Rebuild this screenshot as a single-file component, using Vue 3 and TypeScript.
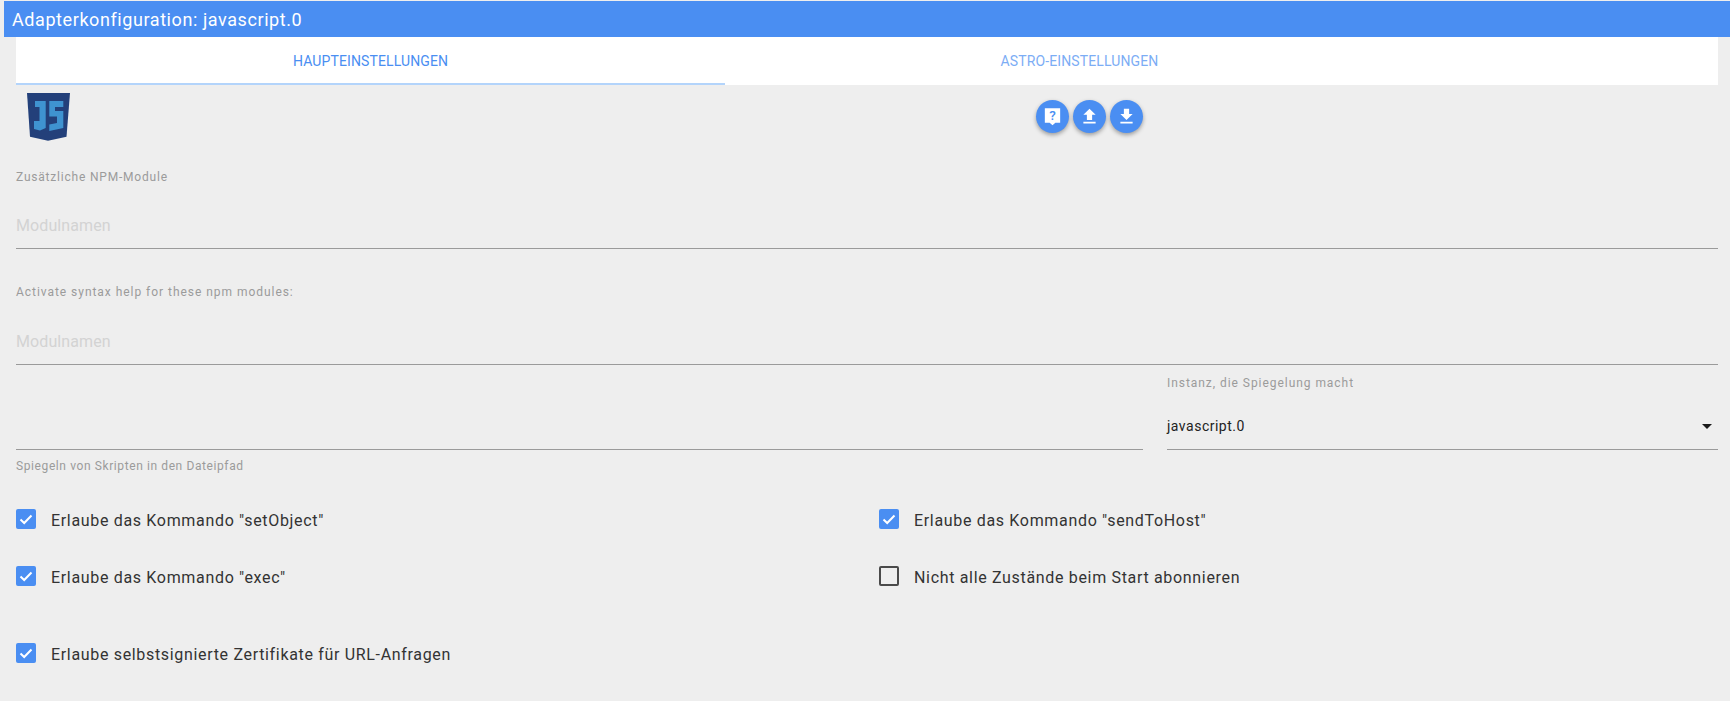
<script setup lang="ts">
interface Check { label: string; checked: boolean }
const leftChecks: Check[] = [
  { label: 'Erlaube das Kommando "setObject"', checked: true },
  { label: 'Erlaube das Kommando "exec"', checked: true },
]
const rightChecks: Check[] = [
  { label: 'Erlaube das Kommando "sendToHost"', checked: true },
  { label: 'Nicht alle Zustände beim Start abonnieren', checked: false },
]
</script>

<template>
  <div class="page">
    <header class="title">Adapterkonfiguration: javascript.0</header>
    <div class="content">
      <nav class="tabs">
        <div class="tab active">HAUPTEINSTELLUNGEN</div>
        <div class="tab">ASTRO-EINSTELLUNGEN</div>
      </nav>
      <div class="toolbar">
        <svg class="logo" width="43" height="48" viewBox="0 0 43 48">
          <path d="M0 0H43L39.500 43.700L21 47.700L3 43.700Z" fill="#23407a" />
          <path d="M8 8H18.700V35L13 37.500L7 36V28H12.500V14H8Z" fill="#3f93d0" />
          <path d="M22.300 8H36.300V14H28V18H36.300V35L22.300 38V31.500L30 30V23.500H22.300Z" fill="#3f93d0" />
        </svg>
        <div class="fabs">
          <button class="fab">
            <svg class="help" width="24" height="24" viewBox="0 0 24 24"><path fill="#fff" d="M4 3.500H20V18.500H15L12 21L9 18.500H4Z" /><text x="12" y="16" class="q">?</text></svg>
          </button>
          <button class="fab">
            <svg width="24" height="24" viewBox="0 0 24 24"><path fill="#fff" d="M9 16V10H5L12 3L19 10H15V16H9ZM5 20V18H19V20H5Z" /></svg>
          </button>
          <button class="fab">
            <svg width="24" height="24" viewBox="0 0 24 24"><path fill="#fff" d="M19 9H15V3H9V9H5L12 16L19 9ZM5 18V20H19V18H5Z" /></svg>
          </button>
        </div>
      </div>

      <section class="field first">
        <label class="small">Zusätzliche NPM-Module</label>
        <div class="input placeholder">Modulnamen</div>
      </section>
      <section class="field second">
        <label class="small">Activate syntax help for these npm modules:</label>
        <div class="input placeholder">Modulnamen</div>
      </section>

      <section class="mirror">
        <div class="mirror-path">
          <div class="input empty"></div>
          <div class="small hint">Spiegeln von Skripten in den Dateipfad</div>
        </div>
        <div class="mirror-instance">
          <label class="small">Instanz, die Spiegelung macht</label>
          <div class="input select">
            <span>javascript.0</span>
            <i class="arrow"></i>
          </div>
        </div>
      </section>

      <section class="checks">
        <div class="check-col">
          <div v-for="c in leftChecks" :key="c.label" class="check">
            <span class="box" :class="{ on: c.checked }">
              <svg v-if="c.checked" width="20" height="20" viewBox="0 0 20 20"><path d="M4.500 10.500L8.200 14L15.500 6.500" fill="none" stroke="#fff" stroke-width="2" /></svg>
            </span>
            <span class="check-label">{{ c.label }}</span>
          </div>
        </div>
        <div class="check-col">
          <div v-for="c in rightChecks" :key="c.label" class="check">
            <span class="box" :class="{ on: c.checked }">
              <svg v-if="c.checked" width="20" height="20" viewBox="0 0 20 20"><path d="M4.500 10.500L8.200 14L15.500 6.500" fill="none" stroke="#fff" stroke-width="2" /></svg>
            </span>
            <span class="check-label">{{ c.label }}</span>
          </div>
        </div>
      </section>

      <div class="check last">
        <span class="box on">
          <svg width="20" height="20" viewBox="0 0 20 20"><path d="M4.500 10.500L8.200 14L15.500 6.500" fill="none" stroke="#fff" stroke-width="2" /></svg>
        </span>
        <span class="check-label">Erlaube selbstsignierte Zertifikate für URL-Anfragen</span>
      </div>
    </div>
  </div>
</template>

<style>
html, body { margin: 0; background: #eeeeee; overflow: hidden; }
</style>

<style scoped>
.page {
  width: 1730px;
  height: 701px;
  box-sizing: border-box;
  padding: 1px 0 0 4px;
  background: #eeeeee;
  font-family: Roboto, "Noto Sans", sans-serif;
  overflow: hidden;
}
.title {
  height: 36px;
  line-height: 37px;
  padding-left: 8px;
  background: #4a8ef2;
  color: #fff;
  font-size: 18px;
  letter-spacing: 0.58px;
}
.content { padding: 0 12px; }
.tabs { display: flex; height: 48px; background: #fff; }
.tab {
  flex: 0 0 709px;
  box-sizing: border-box;
  text-align: center;
  line-height: 48px;
  font-size: 14px;
  letter-spacing: 0.12px;
  color: #4a8ef2;
  opacity: 0.72;
}
.tab.active { opacity: 1; border-bottom: 2px solid #b3d4fb; }
.toolbar { display: flex; height: 56px; position: relative; }
.logo { margin: 8px 0 0 11px; }
.fabs {
  position: absolute;
  left: 1020px;
  top: 15px;
  display: flex;
  gap: 4px;
}
.fab {
  width: 33px;
  height: 33px;
  padding: 0;
  border: 0;
  border-radius: 50%;
  background: #4a8ef2;
  display: flex;
  align-items: center;
  justify-content: center;
  box-shadow: 0 2px 4px rgba(0, 0, 0, 0.35);
}
.fab svg { width: 21px; height: 21px; }
.fab svg.help { width: 23px; height: 23px; }
.q {
  font-family: Roboto, sans-serif;
  font-size: 14px;
  font-weight: 500;
  fill: #4a8ef2;
  text-anchor: middle;
}
.small {
  display: block;
  font-size: 12px;
  line-height: 14px;
  color: #9b9b9b;
  letter-spacing: 0.88px;
}
.field.first .small { letter-spacing: 0.8px; }
.field.second .small { letter-spacing: 0.96px; }
.mirror-instance .small { letter-spacing: 0.95px; }
.input {
  box-sizing: border-box;
  border-bottom: 1px solid #9a9a9a;
  font-size: 16px;
}
.placeholder {
  height: 47px;
  line-height: 47px;
  color: #d3d3d3;
  letter-spacing: 0.1px;
}
.field.first { padding-top: 29px; }
.field.first .placeholder { margin-top: 18px; }
.field.second { padding-top: 36px; }
.field.second .placeholder { margin-top: 19px; }
.mirror { display: flex; gap: 24px; margin-top: 1px; }
.mirror-path { flex: 0 0 1127px; padding-top: 37px; }
.mirror-path .empty { height: 47px; }
.hint { margin-top: 9px; letter-spacing: 0.6px; }
.mirror-instance { flex: 1; padding-top: 10px; }
.select {
  height: 60px;
  padding-top: 13px;
  display: flex;
  align-items: center;
  justify-content: space-between;
  color: #222;
  font-size: 14px;
  letter-spacing: 0.5px;
}
.arrow {
  width: 0;
  height: 0;
  margin-right: 6px;
  border-left: 5px solid transparent;
  border-right: 5px solid transparent;
  border-top: 5px solid #1a1a1a;
}
.checks { display: flex; margin-top: 36px; }
.check-col { flex: 0 0 863px; display: flex; flex-direction: column; gap: 37px; }
.check { display: flex; align-items: center; height: 20px; }
.last { margin-top: 57px; }
.box {
  width: 20px;
  height: 20px;
  box-sizing: border-box;
  border: 2px solid #4a4a4a;
  border-radius: 2px;
  flex: none;
  display: block;
  position: relative;
}
.box.on { background: #4a8ef2; border: 0; }
.box svg { display: block; }
.check-label {
  margin-left: 15px;
  font-size: 16px;
  color: #333;
  letter-spacing: 0.67px;
  position: relative;
  top: 1px;
}
</style>
